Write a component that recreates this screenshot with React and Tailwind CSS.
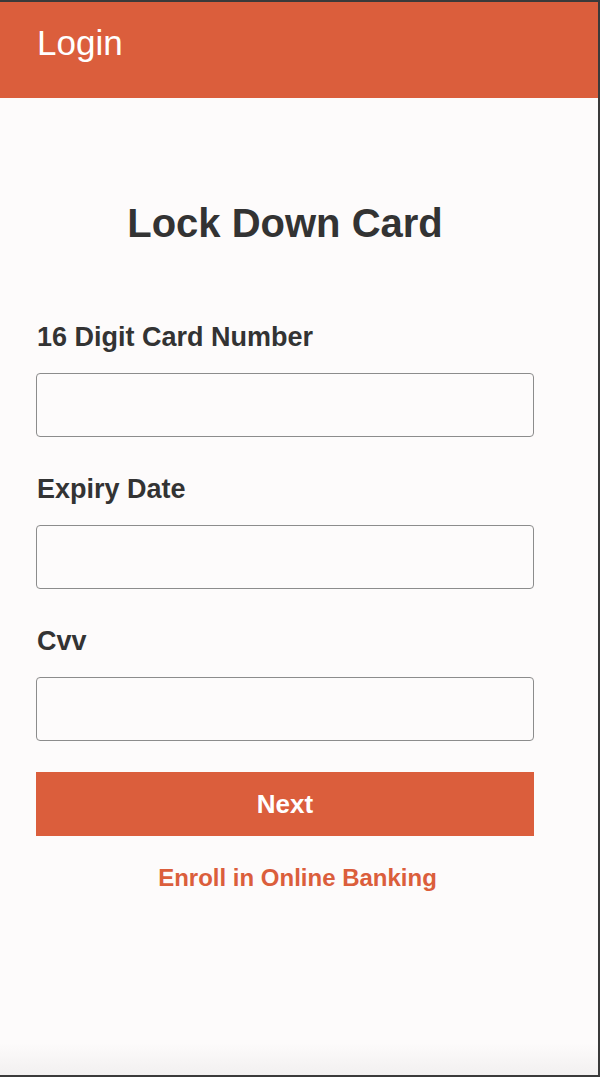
export default function App() {
  const font = { fontFamily: '"Liberation Sans", Arial, Helvetica, sans-serif' };
  const fields = ["16 Digit Card Number", "Expiry Date", "Cvv"];
  return (
    <div
      className="h-[1077px] w-[600px] flex flex-col border-t-2 border-r-2 border-b-2 border-[#3a3a3a] bg-[#fdfbfb] overflow-hidden"
      style={font}
    >
      <header className="h-[96px] bg-[#db5e3c] pt-[23px] pl-[37px]">
        <h1 className="text-[35px] leading-none text-white">Login</h1>
      </header>
      <main className="flex-1 flex flex-col">
        <div className="ml-[36px] w-[498px] flex flex-col">
          <h2 className="mt-[105px] text-center text-[40px] leading-[40px] font-bold text-[#333333]">
            Lock Down Card
          </h2>
          <div className="mt-[81px] flex flex-col gap-[39px]">
            {fields.map((f) => (
              <div key={f} className="flex flex-col gap-[22px]">
                <label className="pl-px text-[27px] leading-none font-bold text-[#333333]">{f}</label>
                <input
                  type="text"
                  className="h-[64px] w-full rounded-[4px] border-[1.5px] border-[#8c8c8c] bg-[#fdfbfb] px-3 outline-none"
                />
              </div>
            ))}
          </div>
          <button className="mt-[31px] h-[64px] w-full bg-[#db5e3c] text-[26px] leading-none font-bold text-white">
            Next
          </button>
        </div>
        <div className="mt-[30px] w-full pr-[3px] text-center">
          <a className="text-[24px] leading-none font-bold text-[#db5e3c]">Enroll in Online Banking</a>
        </div>
        <div className="mt-auto h-[32px] bg-gradient-to-b from-[#fdfbfb] to-[#f2f0f0]" />
      </main>
    </div>
  );
}
